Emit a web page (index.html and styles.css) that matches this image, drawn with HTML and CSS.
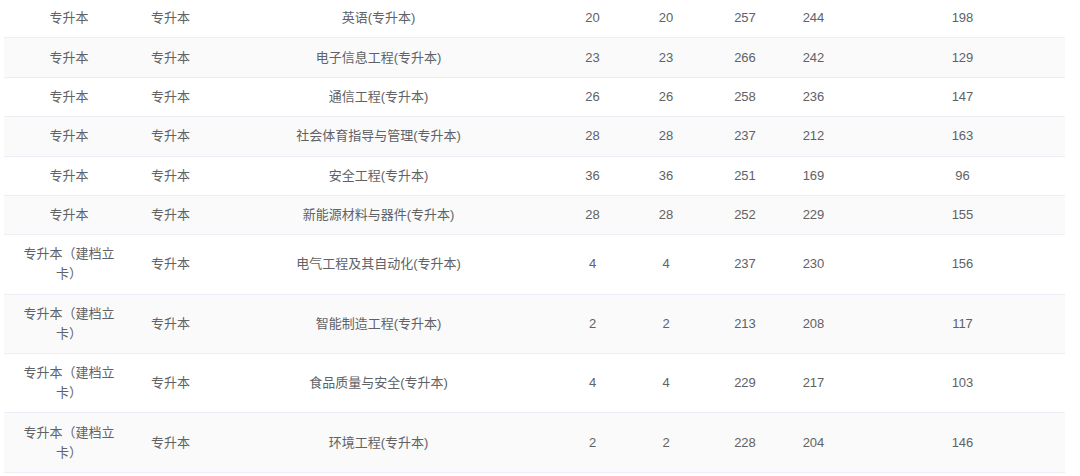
FILE: index.html
```html
<!DOCTYPE html>
<html lang="zh-CN">
<head>
<meta charset="utf-8">
<title>专升本录取数据</title>
<link rel="stylesheet" href="styles.css">
</head>
<body>
<div class="wrap">
<table class="score-table">
  <colgroup>
    <col class="c1"><col class="c2"><col class="c3"><col class="c4"><col class="c5"><col class="c6"><col class="c7"><col class="c8">
  </colgroup>
  <tbody>
    <tr><td class="type">专升本</td><td>专升本</td><td>英语(专升本)</td><td>20</td><td>20</td><td>257</td><td>244</td><td class="last">198</td></tr>
    <tr><td class="type">专升本</td><td>专升本</td><td>电子信息工程(专升本)</td><td>23</td><td>23</td><td>266</td><td>242</td><td class="last">129</td></tr>
    <tr><td class="type">专升本</td><td>专升本</td><td>通信工程(专升本)</td><td>26</td><td>26</td><td>258</td><td>236</td><td class="last">147</td></tr>
    <tr><td class="type">专升本</td><td>专升本</td><td>社会体育指导与管理(专升本)</td><td>28</td><td>28</td><td>237</td><td>212</td><td class="last">163</td></tr>
    <tr><td class="type">专升本</td><td>专升本</td><td>安全工程(专升本)</td><td>36</td><td>36</td><td>251</td><td>169</td><td class="last">96</td></tr>
    <tr><td class="type">专升本</td><td>专升本</td><td>新能源材料与器件(专升本)</td><td>28</td><td>28</td><td>252</td><td>229</td><td class="last">155</td></tr>
    <tr><td class="type">专升本（建档立卡）</td><td>专升本</td><td>电气工程及其自动化(专升本)</td><td>4</td><td>4</td><td>237</td><td>230</td><td class="last">156</td></tr>
    <tr><td class="type">专升本（建档立卡）</td><td>专升本</td><td>智能制造工程(专升本)</td><td>2</td><td>2</td><td>213</td><td>208</td><td class="last">117</td></tr>
    <tr><td class="type">专升本（建档立卡）</td><td>专升本</td><td>食品质量与安全(专升本)</td><td>4</td><td>4</td><td>229</td><td>217</td><td class="last">103</td></tr>
    <tr><td class="type">专升本（建档立卡）</td><td>专升本</td><td>环境工程(专升本)</td><td>2</td><td>2</td><td>228</td><td>204</td><td class="last">146</td></tr>
  </tbody>
</table>
</div>
</body>
</html>
```

FILE: styles.css
```css
html, body {
  margin: 0;
  padding: 0;
  background: #ffffff;
}

.wrap {
  padding: 0 15px 0 4px;
  overflow: hidden;
  height: 476px;
}

.score-table {
  width: 1061px;
  margin-top: -1px;
  border-collapse: collapse;
  table-layout: fixed;
  font-family: "Liberation Sans", "Noto Sans CJK SC", sans-serif;
  font-size: 13px;
  color: #606266;
}

.c1 { width: 130px; }
.c2 { width: 73px; }
.c3 { width: 343px; }
.c4 { width: 85px; }
.c5 { width: 62px; }
.c6 { width: 96px; }
.c7 { width: 41px; }
.c8 { width: 231px; }

.score-table td {
  padding: 9.2px 0;
  line-height: 20px;
  text-align: center;
  vertical-align: middle;
  border-bottom: 1px solid #ebeef5;
  white-space: nowrap;
}

.score-table td.type {
  padding-left: 14px;
  padding-right: 14px;
  white-space: normal;
}

.score-table td.last {
  padding-left: 26px;
}

.score-table tr:nth-child(even) td {
  background: #fafafa;
}
```
